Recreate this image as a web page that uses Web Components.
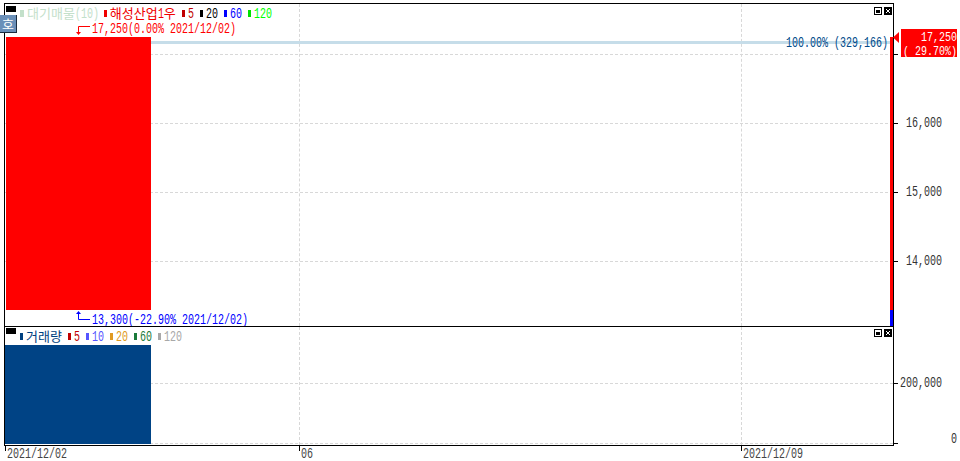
<!DOCTYPE html>
<html lang="ko">
<head>
<meta charset="utf-8">
<title>chart</title>
<style>
html, body { margin: 0; padding: 0; background: #fff; overflow: hidden; }
body { font: 13px/14px "Noto Sans CJK KR", "Liberation Mono", sans-serif; }
</style>
</head>
<body>
<stock-chart></stock-chart>

<template id="stock-chart-tpl">
    <style>
        :host { display: grid; grid-template-columns: 890px 66px; grid-template-rows: 323px 119px 16px; width: 960px; height: 461px; padding: 3px 0 0 4px; box-sizing: border-box; position: relative; }
        .hogabtn { position: absolute; left: 0; top: 15px; width: 16px; height: 17px; background: #6a8fb8; border-right: 1px solid #1c2c40; border-bottom: 1px solid #1c2c40; color: #fff; font: 13px/17px "Noto Sans CJK KR", sans-serif; text-align: center; }
    </style>
    <chart-pane style="grid-column:1;grid-row:1;--head-top:1px" lines="50,119,188,257" columns="294,736">
        <chart-legend slot="legend">
            <legend-item color="#c3e0ca" style="--mark-w:4px;margin-right:-1px">대기매물<mono-text>(10)</mono-text></legend-item>
            <legend-item color="#f00000">해성산업<mono-text>1</mono-text>우</legend-item>
            <legend-item color="#c00000"><mono-text>5</mono-text></legend-item>
            <legend-item color="#000000"><mono-text>20</mono-text></legend-item>
            <legend-item color="#0000ff"><mono-text>60</mono-text></legend-item>
            <legend-item color="#00ff00" mark="#00e000"><mono-text>120</mono-text></legend-item>
        </chart-legend>
        <price-plot slot="plot"></price-plot>
    </chart-pane>
    <chart-pane style="grid-column:1;grid-row:2;--head-top:0px" lines="56,116" columns="294,736">
        <chart-legend slot="legend">
            <legend-item color="#004080">거래량</legend-item>
            <legend-item color="#c00000"><mono-text>5</mono-text></legend-item>
            <legend-item color="#5555ff"><mono-text>10</mono-text></legend-item>
            <legend-item color="#e09a20"><mono-text>20</mono-text></legend-item>
            <legend-item color="#1a7a3a"><mono-text>60</mono-text></legend-item>
            <legend-item color="#a8a8a8"><mono-text>120</mono-text></legend-item>
        </chart-legend>
        <volume-plot slot="plot"></volume-plot>
    </chart-pane>
    <price-axis style="grid-column:2;grid-row:1"></price-axis>
    <volume-axis style="grid-column:2;grid-row:2"></volume-axis>
    <date-axis style="grid-column:1 / span 2;grid-row:3"></date-axis>
    <div class="hogabtn">호</div>
</template>

<template id="mono-text-tpl">
    <style>
        :host { display: inline-block; vertical-align: top; height: 14px; }
        span { display: inline-block; font: var(--mono-size, 14px)/14px "Liberation Mono", monospace; white-space: pre; transform: scaleX(var(--mono-scale, .7143)); transform-origin: left center; }
    </style>
    <span><slot></slot></span>
</template>

<template id="chart-pane-tpl">
    <style>
        :host { display: block; position: relative; box-sizing: border-box; border-left: 1px solid #000; border-top: 1px solid #000; border-right: 1px solid #000; }
        .grid { position: absolute; inset: 0; }
        .head { position: absolute; left: 0; top: 0; right: 0; height: 20px; z-index: 2; }
        .min { position: absolute; left: 1px; top: var(--head-top); width: 10px; height: 6px; background: #000; margin-top: 1px; }
        .btns { position: absolute; right: 1px; top: var(--head-top); margin-top: 2px; display: flex; gap: 2px; }
        .btns svg { display: block; width: 8px; height: 8px; }
        .hline { position: absolute; left: 0; right: 0; border-top: 1px dashed #d8d8d8; }
        .vline { position: absolute; top: 0; bottom: 0; border-left: 1px dashed #d8d8d8; }
    </style>
    <div class="grid"></div>
    <slot name="plot"></slot>
    <div class="head">
        <div class="min"></div>
        <slot name="legend"></slot>
        <div class="btns">
            <svg viewBox="0 0 8 8"><path fill="#000" fill-rule="evenodd" d="M0 0h8v8H0zM1 1v6h6V1z"/><rect x="2" y="3" width="4" height="3" fill="#000"/></svg>
            <svg viewBox="0 0 8 8"><rect width="8" height="8" fill="#000"/><path fill="#fff" d="M2 2h1v1H2zM5 2h1v1H5zM3 3h2v2H3zM2 5h1v1H2zM5 5h1v1H5z"/></svg>
        </div>
    </div>
</template>

<template id="chart-legend-tpl">
    <style>
        :host { display: flex; align-items: center; gap: 6px; position: absolute; left: 15px; top: 2px; height: 14px; white-space: nowrap; }
    </style>
    <slot></slot>
</template>

<template id="legend-item-tpl">
    <style>
        :host { display: flex; align-items: center; gap: 3px; }
        i { display: block; width: var(--mark-w, 3px); height: 7px; background: var(--mark, currentColor); }
        span { display: block; height: 14px; line-height: 14px; }
    </style>
    <i></i><span><slot></slot></span>
</template>

<template id="price-plot-tpl">
    <style>
        :host { display: block; position: absolute; inset: 0; }
        .candle { position: absolute; left: 1px; top: 33px; width: 145px; height: 273px; background: #f00; }
        .vp { position: absolute; left: 146px; right: 3px; top: 37px; height: 3px; background: #c6dde9; }
        .vplabel { position: absolute; right: 5px; top: 31px; color: #004a8a; }
        .hi, .lo { position: absolute; left: 87px; white-space: nowrap; }
        .hi { top: 17px; color: #f00; }
        .lo { top: 308px; color: #00f; }
        svg { position: absolute; overflow: visible; }
        .vol { position: absolute; right: 0; top: 33px; width: 3px; height: 273px; background: #f00; }
        .volb { position: absolute; right: 0; top: 306px; width: 3px; height: 16px; background: #00f; }
    </style>
    <div class="vp"></div>
    <div class="candle"></div>
    <div class="vol"></div>
    <div class="volb"></div>
    <mono-text class="vplabel">100.00% (329,166)</mono-text>
    <svg style="left:70px;top:21px" width="16" height="11" viewBox="0 0 16 11"><path d="M15 1.500H3.500V7" fill="none" stroke="#f00"/><path d="M1 7h5l-2.500 3z" fill="#f00"/></svg>
    <mono-text class="hi">17,250(0.00% 2021/12/02)</mono-text>
    <svg style="left:70px;top:306px" width="16" height="11" viewBox="0 0 16 11"><path d="M15 9.500H3.500V3" fill="none" stroke="#00f"/><path d="M1 4h5L3.500 1z" fill="#00f"/></svg>
    <mono-text class="lo">13,300(-22.90% 2021/12/02)</mono-text>
</template>

<template id="volume-plot-tpl">
    <style>
        :host { display: block; position: absolute; inset: 0; }
        .bar { position: absolute; left: 0; top: 18px; width: 146px; height: 99px; background: #004385; }
    </style>
    <div class="bar"></div>
</template>

<template id="price-axis-tpl">
    <style>
        :host { display: block; position: relative; }
        .tick { position: absolute; left: 0; width: 4px; height: 1px; background: #000; }
        .lab { position: absolute; left: 12px; color: #333; }
        .box { position: absolute; left: 7px; top: 26px; width: 56px; height: 28px; background: #f00; color: #fff; display: flex; flex-direction: column; align-items: flex-end; --mono-size: 12.5px; --mono-scale: .8; }
        svg { position: absolute; left: -1px; top: 29px; }
    </style>
    <div class="tick" style="top:51px"></div>
    <div class="tick" style="top:120px"></div><mono-text class="lab" style="top:112px">16,000</mono-text>
    <div class="tick" style="top:189px"></div><mono-text class="lab" style="top:181px">15,000</mono-text>
    <div class="tick" style="top:258px"></div><mono-text class="lab" style="top:250px">14,000</mono-text>
    <svg width="7" height="11" viewBox="0 0 7 11"><path d="M0 5.500L6 0v11z" fill="#f00"/></svg>
    <div class="box"><mono-text>17,250</mono-text><mono-text>( 29.70%)</mono-text></div>
</template>

<template id="volume-axis-tpl">
    <style>
        :host { display: block; position: relative; }
        .tick { position: absolute; left: 0; width: 4px; height: 1px; background: #000; }
        .lab { position: absolute; color: #333; }
    </style>
    <div class="tick" style="top:57px"></div><mono-text class="lab" style="left:6px;top:49px">200,000</mono-text>
    <div class="tick" style="top:117px"></div><mono-text class="lab" style="left:57px;top:105px">0</mono-text>
</template>

<template id="date-axis-tpl">
    <style>
        :host { display: block; position: relative; border-top: 1px solid #000; margin-right: 66px; }
        .d { position: absolute; top: 0; color: #444; padding-left: 2px; }
        .d::before { content: ""; position: absolute; left: 0; top: 0; width: 1px; height: 5px; background: #000; }
    </style>
    <span class="d" style="left:1px"><mono-text>2021/12/02</mono-text></span>
    <span class="d" style="left:295px"><mono-text>06</mono-text></span>
    <span class="d" style="left:737px"><mono-text>2021/12/09</mono-text></span>
</template>

<script>
class TemplatedElement extends HTMLElement {
    constructor() {
        super();
        this.attachShadow({ mode: 'open' });
        const tpl = document.getElementById(this.constructor.tpl);
        this.shadowRoot.appendChild(tpl.content.cloneNode(true));
    }
}

class StockChart extends TemplatedElement { static tpl = 'stock-chart-tpl'; }
class ChartLegend extends TemplatedElement { static tpl = 'chart-legend-tpl'; }
class PricePlot extends TemplatedElement { static tpl = 'price-plot-tpl'; }
class VolumePlot extends TemplatedElement { static tpl = 'volume-plot-tpl'; }
class PriceAxis extends TemplatedElement { static tpl = 'price-axis-tpl'; }
class VolumeAxis extends TemplatedElement { static tpl = 'volume-axis-tpl'; }
class DateAxis extends TemplatedElement { static tpl = 'date-axis-tpl'; }

// narrow 6px-per-char text, like the bitmap font of the HTS chart
class MonoText extends TemplatedElement {
    static tpl = 'mono-text-tpl';

    connectedCallback() {
        this.style.width = this.textContent.length * 6 + 'px';
    }
}

class ChartPane extends TemplatedElement {
    static tpl = 'chart-pane-tpl';

    connectedCallback() {
        const grid = this.shadowRoot.querySelector('.grid');
        const add = (cls, prop, val) => {
            const line = document.createElement('div');
            line.className = cls;
            line.style[prop] = val + 'px';
            grid.appendChild(line);
        };
        (this.getAttribute('lines') || '').split(',').forEach(v => add('hline', 'top', v));
        (this.getAttribute('columns') || '').split(',').forEach(v => add('vline', 'left', v));
    }
}

class LegendItem extends TemplatedElement {
    static tpl = 'legend-item-tpl';

    connectedCallback() {
        this.style.color = this.getAttribute('color');
        if (this.hasAttribute('mark')) this.style.setProperty('--mark', this.getAttribute('mark'));
    }
}

customElements.define('mono-text', MonoText);
customElements.define('stock-chart', StockChart);
customElements.define('chart-pane', ChartPane);
customElements.define('chart-legend', ChartLegend);
customElements.define('legend-item', LegendItem);
customElements.define('price-plot', PricePlot);
customElements.define('volume-plot', VolumePlot);
customElements.define('price-axis', PriceAxis);
customElements.define('volume-axis', VolumeAxis);
customElements.define('date-axis', DateAxis);
</script>
</body>
</html>
